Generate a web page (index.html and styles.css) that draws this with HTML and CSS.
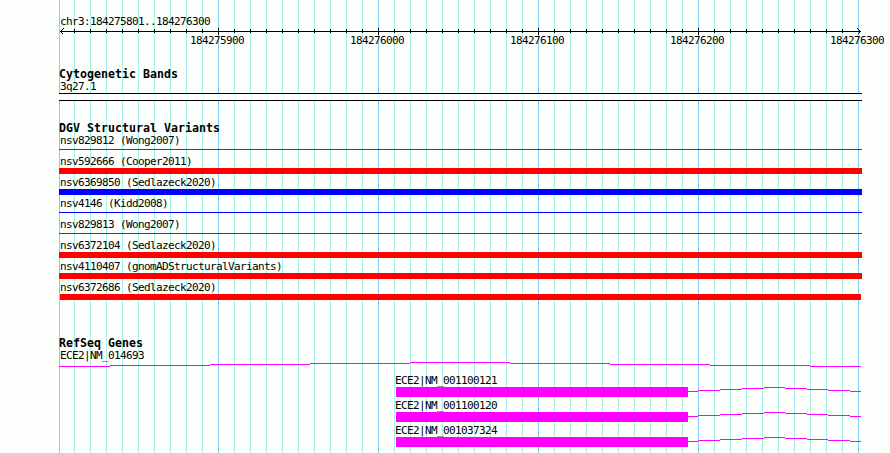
FILE: index.html
```html
<!DOCTYPE html>
<html lang="en">
<head>
    <meta charset="UTF-8">
    <title>chr3:184275801..184276300</title>
    <link rel="stylesheet" href="styles.css">
</head>
<body>
    <div class="panel">
        <header class="ruler">
            <p class="label">chr3:184275801..184276300</p>
            <svg class="axis" width="803" height="7" viewBox="0 0 803 7">
                <defs>
                    <pattern id="minor" x="15" y="0" width="16" height="7" patternUnits="userSpaceOnUse">
                        <rect x="0" y="1" width="1" height="4"/>
                    </pattern>
                </defs>
                <rect x="15" y="0" width="784" height="7" fill="url(#minor)"/>
                <path d="M1 3.5H802M159.5 0v7M319.5 0v7M479.5 0v7M639.5 0v7" stroke="#000"/>
                <path d="M4.5 .5L1.5 3.5L4.5 6.5M798.5 .5L801.5 3.5L798.5 6.5" fill="none" stroke="#000"/>
            </svg>
            <div class="scale">
                <span>184275900</span>
                <span>184276000</span>
                <span>184276100</span>
                <span>184276200</span>
                <span>184276300</span>
            </div>
        </header>

        <section class="track bands">
            <h2>Cytogenetic Bands</h2>
            <p class="label">3q27.1</p>
            <div class="band"></div>
        </section>

        <section class="track variants">
            <h2>DGV Structural Variants</h2>
            <div class="feature">
                <p class="label">nsv829812 (Wong2007)</p>
                <div class="bar thin loss"></div>
            </div>
            <div class="feature">
                <p class="label">nsv592666 (Cooper2011)</p>
                <div class="bar loss"></div>
            </div>
            <div class="feature">
                <p class="label">nsv6369850 (Sedlazeck2020)</p>
                <div class="bar gain"></div>
            </div>
            <div class="feature">
                <p class="label">nsv4146 (Kidd2008)</p>
                <div class="bar thin gain"></div>
            </div>
            <div class="feature">
                <p class="label">nsv829813 (Wong2007)</p>
                <div class="bar thin loss"></div>
            </div>
            <div class="feature">
                <p class="label">nsv6372104 (Sedlazeck2020)</p>
                <div class="bar loss"></div>
            </div>
            <div class="feature">
                <p class="label">nsv4110407 (gnomADStructuralVariants)</p>
                <div class="bar loss"></div>
            </div>
            <div class="feature">
                <p class="label">nsv6372686 (Sedlazeck2020)</p>
                <div class="bar loss inner"></div>
            </div>
        </section>

        <section class="track genes">
            <h2>RefSeq Genes</h2>
            <p class="label">ECE2|NM_014693</p>
            <svg class="intron" width="803" height="5" viewBox="0 0 803 5">
                <path d="M0 4.5H51M51 3.5H151M151 2.5H251M251 1.5H351M351 .5H451M451 1.5H551M551 2.5H651M651 3.5H751M751 4.5H802"/>
            </svg>
            <div class="gene">
                <p class="label">ECE2|NM_001100121</p>
                <div class="model">
                    <div class="exon"></div>
                    <svg class="intron" width="173" height="10" viewBox="0 0 173 10">
                        <path d="M0 4.5H10M10 3.5H32M32 2.5H54M54 1.5H76M76 .5H97M97 1.5H119M119 2.5H140M140 3.5H162M162 4.5H173"/>
                    </svg>
                </div>
            </div>
            <div class="gene">
                <p class="label">ECE2|NM_001100120</p>
                <div class="model">
                    <div class="exon"></div>
                    <svg class="intron" width="173" height="10" viewBox="0 0 173 10">
                        <path d="M0 4.5H10M10 3.5H32M32 2.5H54M54 1.5H76M76 .5H97M97 1.5H119M119 2.5H140M140 3.5H162M162 4.5H173"/>
                    </svg>
                </div>
            </div>
            <div class="gene">
                <p class="label">ECE2|NM_001037324</p>
                <div class="model">
                    <div class="exon"></div>
                    <svg class="intron" width="173" height="10" viewBox="0 0 173 10">
                        <path d="M0 4.5H10M10 3.5H32M32 2.5H54M54 1.5H76M76 .5H97M97 1.5H119M119 2.5H140M140 3.5H162M162 4.5H173"/>
                    </svg>
                </div>
            </div>
        </section>
    </div>
</body>
</html>
```
FILE: styles.css
```css
body {
    margin: 0;
    background-color: #fdfffc;
    color: #000;
    font-family: "DejaVu Sans Mono", monospace;
}
/* grid: first base, every 100 bases, every 10 bases */
.panel {
    box-sizing: border-box;
    width: 831px;
    height: 453px;
    margin-left: 59px;
    padding-top: 15px;
    background-image:
        linear-gradient(#87ceeb, #87ceeb),
        linear-gradient(90deg, #fdfffc, #fdfffc),
        linear-gradient(90deg, #7fcbf2 1px, transparent 1px),
        linear-gradient(90deg, #a6efec 1px, transparent 1px);
    background-size: 1px 100%, 31px 100%, 160px 100%, 16px 100%;
    background-position: 0 0, 800px 0, 159px 0, 15px 0;
    background-repeat: no-repeat, no-repeat, repeat-x, repeat-x;
}
svg {
    display: block;
    shape-rendering: crispEdges;
}
p,
h2 {
    margin: 0;
    white-space: nowrap;
}
.label,
.scale {
    height: 13px;
    font-size: 11px;
    line-height: 13px;
    letter-spacing: -0.623px;
}
.label {
    padding-left: 1px;
}
h2 {
    height: 12px;
    font-size: 11.6px;
    line-height: 13px;
    letter-spacing: 0.016px;
}
.scale {
    display: flex;
    gap: 106px;
    margin-top: -1px;
    padding-left: 131px;
}
.scale span {
    flex: 0 0 54px;
}
.bands {
    margin-top: 21px;
}
.band {
    box-sizing: border-box;
    width: 803px;
    height: 8px;
    border-top: 1px solid #000;
    border-bottom: 1px solid #000;
    background-color: #fdfffc;
}
.variants {
    margin-top: 21px;
}
.feature {
    height: 21px;
}
.bar {
    width: 803px;
    height: 6px;
}
.bar.thin {
    height: 1px;
    margin-top: 2px;
}
.bar.inner {
    width: 801px;
    margin-left: 1px;
}
.loss {
    background-color: #ff0000;
}
.thin.loss {
    background-color: #e00000;
}
.gain {
    background-color: #0000ff;
}
.genes {
    margin-top: 35px;
}
.gene {
    height: 25px;
    margin-left: 336px;
}
.genes > .intron {
    margin-bottom: 7px;
}
.gene .label {
    padding-left: 0;
}
.model {
    display: flex;
    margin-left: 1px;
}
.exon {
    flex: 0 0 292px;
    height: 10px;
    background-color: #ff00ff;
}
.intron {
    flex: none;
    fill: none;
    stroke: #ff00ff;
}
```
